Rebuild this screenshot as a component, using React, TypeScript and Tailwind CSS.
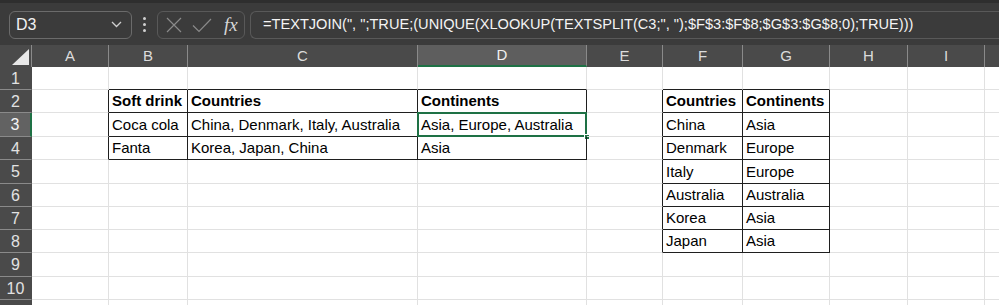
import React from 'react';

const FONT = { fontFamily: '"Liberation Sans", Arial, sans-serif' };

const cols = [
  { name: 'A', w: 'w-[77px]' },
  { name: 'B', w: 'w-[79px]' },
  { name: 'C', w: 'w-[230px]' },
  { name: 'D', w: 'w-[169px]' },
  { name: 'E', w: 'w-[76px]' },
  { name: 'F', w: 'w-[80px]' },
  { name: 'G', w: 'w-[87px]' },
  { name: 'H', w: 'w-[78px]' },
  { name: 'I', w: 'w-[77px]' },
  { name: '', w: 'w-[100px]' },
];

const rowHeights = ['h-[23px]', 'h-[23px]', 'h-[24px]', 'h-[23px]', 'h-[24px]', 'h-[23px]', 'h-[23px]', 'h-[23px]', 'h-[24px]', 'h-[23px]', 'h-[23px]'];

// cell contents keyed by "row-colIndex"
const data: Record<string, { text: string; bold?: boolean }> = {
  '2-1': { text: 'Soft drink', bold: true },
  '2-2': { text: 'Countries', bold: true },
  '2-3': { text: 'Continents', bold: true },
  '3-1': { text: 'Coca cola' },
  '3-2': { text: 'China, Denmark, Italy, Australia' },
  '3-3': { text: 'Asia, Europe, Australia' },
  '4-1': { text: 'Fanta' },
  '4-2': { text: 'Korea, Japan, China' },
  '4-3': { text: 'Asia' },
  '2-5': { text: 'Countries', bold: true },
  '2-6': { text: 'Continents', bold: true },
  '3-5': { text: 'China' },
  '3-6': { text: 'Asia' },
  '4-5': { text: 'Denmark' },
  '4-6': { text: 'Europe' },
  '5-5': { text: 'Italy' },
  '5-6': { text: 'Europe' },
  '6-5': { text: 'Australia' },
  '6-6': { text: 'Australia' },
  '7-5': { text: 'Korea' },
  '7-6': { text: 'Asia' },
  '8-5': { text: 'Japan' },
  '8-6': { text: 'Asia' },
};

const inTable = (r: number, c: number) =>
  (r >= 2 && r <= 4 && c >= 1 && c <= 3) || (r >= 2 && r <= 8 && c >= 5 && c <= 6);

const FormulaBar = () => (
  <div className="h-[45px] bg-[#3b3b3b] border-t-[3px] border-[#2e2e2e] flex items-center pl-[9px] pt-[1px]">
    {/* name box */}
    <div className="w-[123px] h-[28px] rounded-[6px] border border-[#6b6b6b] flex items-center justify-between pl-[6px] pr-[9px]">
      <span className="text-[16px] text-[#f2f2f2]">D3</span>
      <svg width="11" height="7" viewBox="0 0 11 7" fill="none">
        <path d="M1 1l4.5 4.5L10 1" stroke="#cfcfcf" strokeWidth="1.3" />
      </svg>
    </div>
    {/* grip */}
    <div className="w-[25px] flex flex-col items-center gap-[3px]">
      <span className="w-[3px] h-[3px] rounded-full bg-[#d0d0d0]" />
      <span className="w-[3px] h-[3px] rounded-full bg-[#d0d0d0]" />
      <span className="w-[3px] h-[3px] rounded-full bg-[#d0d0d0]" />
    </div>
    {/* cancel / enter / fx */}
    <div className="w-[88px] h-[28px] rounded-[6px] border border-[#595959] flex items-center pl-[8px] gap-[10px]">
      <svg width="16" height="16" viewBox="0 0 16 16" fill="none">
        <path d="M1 1l14 14M15 1L1 15" stroke="#8a8a8a" strokeWidth="1.2" />
      </svg>
      <svg width="20" height="16" viewBox="0 0 20 16" fill="none">
        <path d="M1 8.5l6 6L19 2" stroke="#8a8a8a" strokeWidth="1.2" />
      </svg>
      <span
        className="text-[19px] italic text-[#d6d6d6] leading-none ml-[2px]"
        style={{ fontFamily: '"Liberation Serif", "Times New Roman", serif' }}
      >
        fx
      </span>
    </div>
    {/* formula */}
    <div className="ml-[5px] flex-1 h-[28px] rounded-l-[6px] border border-r-0 border-[#595959] flex items-center pl-[12px]">
      <span className="text-[14.6px] text-[#f4f4f4] whitespace-nowrap">
        =TEXTJOIN(", ";TRUE;(UNIQUE(XLOOKUP(TEXTSPLIT(C3;", ");$F$3:$F$8;$G$3:$G$8;0);TRUE)))
      </span>
    </div>
  </div>
);

const ColumnHeaders = () => (
  <div className="flex h-[22px] bg-[#4a4a4a]">
    <div className="w-[32px] shrink-0 relative border-r border-[#8a8a8a]">
      <svg className="absolute right-[2px] bottom-[2px]" width="17" height="16" viewBox="0 0 17 16">
        <path d="M17 0V16H0Z" fill="#e8e8e8" />
      </svg>
    </div>
    {cols.map((c, i) => (
      <div
        key={i}
        className={`${c.w} shrink-0 flex items-center justify-center text-[15px] border-r ${
          c.name === 'D'
            ? 'bg-[#5e5e5e] text-[#f0f0f0] border-[#8a8a8a] border-b-2 border-b-[#1e7145]'
            : 'text-[#dcdcdc] border-[#8a8a8a]'
        }`}
      >
        {c.name}
      </div>
    ))}
  </div>
);

const GridRow = ({ r }: { r: number }) => (
  <div className={`flex ${rowHeights[r - 1]}`}>
    <div
      className={`w-[32px] shrink-0 flex items-center justify-center text-[16px] pt-[1px] border-b ${
        r === 3
          ? 'bg-[#626262] text-[#f4f4f4] border-b-[#8a8a8a] border-r-2 border-r-[#1e7145]'
          : 'bg-[#4a4a4a] text-[#e2e2e2] border-b-[#8a8a8a] border-r border-r-[#4a4a4a]'
      }`}
    >
      {r <= 10 ? r : ''}
    </div>
    {cols.map((c, ci) => {
      const cell = data[`${r}-${ci}`];
      const darkR = inTable(r, ci) || inTable(r, ci + 1);
      const darkB = inTable(r, ci) || inTable(r + 1, ci);
      const selected = r === 3 && ci === 3;
      return (
        <div
          key={ci}
          className={`${c.w} shrink-0 relative border-r border-b flex items-end pb-[1px] pl-[3px] text-[15px] leading-[20px] text-black whitespace-nowrap ${
            darkR ? 'border-r-[#1f1f1f]' : 'border-r-[#e1e1e1]'
          } ${darkB ? 'border-b-[#1f1f1f]' : 'border-b-[#e1e1e1]'} ${cell?.bold ? 'font-bold' : ''}`}
        >
          {cell?.text}
          {selected && (
            <>
              <div className="absolute -left-[1px] -top-[1px] -right-[1px] -bottom-[1px] border-2 border-[#1e7145]" />
              <div className="absolute -right-[4px] -bottom-[4px] w-[6px] h-[6px] bg-[#1e7145] border border-white" />
            </>
          )}
        </div>
      );
    })}
  </div>
);

export default function App() {
  return (
    <div className="w-[999px] h-[305px] overflow-hidden bg-white" style={FONT}>
      <FormulaBar />
      <ColumnHeaders />
      {Array.from({ length: 11 }, (_, i) => (
        <GridRow key={i} r={i + 1} />
      ))}
    </div>
  );
}
